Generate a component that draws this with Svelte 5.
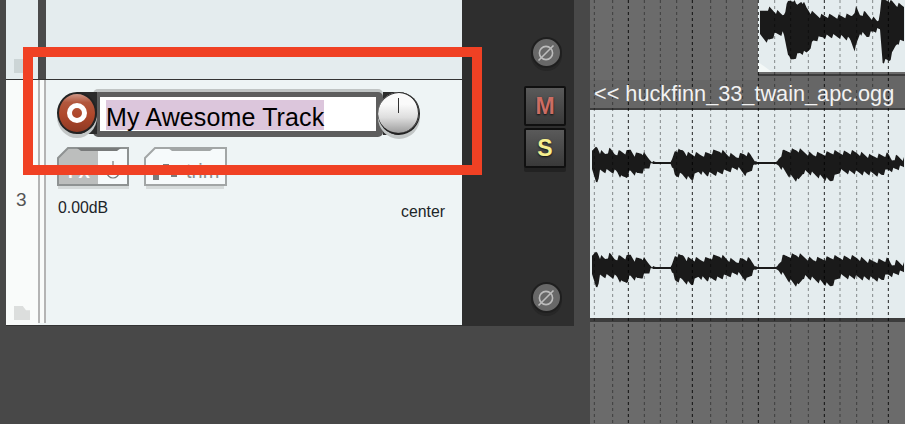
<script>
  // waveform envelopes, traced in 3x coordinates of the arrange view
  const clipTop = [[540,40],[565,25],[585,35],[610,45],[625,5],[640,0],[650,20],[665,0],[680,25],[695,40],[720,48],[780,50],[815,48],[828,25],[840,45],[855,40],[870,50],[895,65],[905,0],[925,0],[950,15],[975,20]];
  const clipBottom = [[540,110],[565,125],[585,105],[610,100],[630,185],[660,160],[680,160],[700,125],[730,110],[780,110],[810,120],[825,150],[840,100],[860,110],[880,95],[900,90],[908,185],[930,180],[950,130],[975,120]];
  const laneTop = [[36,460],[50,438],[60,455],[75,462],[90,450],[105,462],[120,456],[140,458],[152,450],[165,465],[185,458],[205,475],[225,486],[275,486],[285,450],[300,455],[310,450],[320,462],[365,465],[420,452],[445,465],[470,470],[490,462],[510,465],[530,486],[590,486],[610,455],[650,450],[700,465],[760,458],[830,458],[870,470],[925,465],[935,480],[950,470],[975,480]];
  const laneBottom = [[36,515],[50,550],[60,515],[85,515],[110,515],[125,535],[140,530],[150,515],[170,525],[195,510],[220,492],[275,492],[285,530],[305,525],[335,540],[355,515],[380,525],[420,520],[470,505],[500,525],[530,492],[590,492],[625,525],[655,545],[670,515],[720,530],[750,545],[780,515],[850,520],[905,525],[925,510],[940,510],[975,500]];

  function at(points, x) {
    for (let i = 1; i < points.length; i++) {
      if (x <= points[i][0]) {
        const [x0, y0] = points[i - 1];
        const [x1, y1] = points[i];
        return y0 + ((y1 - y0) * (x - x0)) / (x1 - x0);
      }
    }
    return points[points.length - 1][1];
  }

  function wave(top, bottom) {
    const start = top[0][0];
    const upper = [];
    const lower = [];
    let i = 0;
    for (let x = start; x <= 975; x += 4) {
      const a = at(top, x);
      const b = at(bottom, x);
      // rough edge on everything that is not silence
      const up = b - a > 12 ? ((i * 7919) % 13) / 13 - 0.5 : 0;
      const down = b - a > 12 ? ((i * 6151) % 11) / 11 - 0.5 : 0;
      upper.push(`${x},${Math.max(0, a + up * 16)}`);
      lower.unshift(`${x},${b + down * 16}`);
      i++;
    }
    return [...upper, ...lower].join(" ");
  }

  const clipWave = wave(clipTop, clipBottom);
  const laneWave = wave(laneTop, laneBottom);

  const gridLines = [
    [43, false], [98, false], [145, true], [193, false], [241, false],
    [290, false], [337, true], [392, false], [439, false], [488, false],
    [535, true], [584, false], [632, false], [685, false], [733, true],
    [780, false], [830, false], [878, false], [925, true],
  ];
</script>

<div class="app">
  <div class="edge"></div>

  <section class="tracks">
    <div class="track-top">
      <div class="strip"><div class="folder top"></div></div>
      <div class="bar"></div>
    </div>

    <div class="track">
      <div class="strip light">
        <span class="number">3</span>
        <div class="folder"></div>
      </div>
      <div class="rails"></div>
      <div class="controls">
        <div class="name-row">
          <div class="rec"><div class="rec-ball"><div class="rec-ring"></div></div></div>
          <div class="name"><span>My Awesome Track</span></div>
          <div class="pan"><div class="pan-ball"><i></i></div></div>
        </div>

        <div class="buttons">
          <svg class="btn" width="74" height="44" viewBox="0 0 74 44">
            <path d="M1 40h71v3H1z" fill="#d5dada" />
            <path d="M1 12 11 2H71V39H1Z" fill="#f6fafb" />
            <path d="M1 12 11 2H41V39H1Z" fill="#bcbebd" />
            <path d="M1 12 11 2H71V39H1Z" fill="none" stroke="#8e9292" stroke-width="2" />
            <path d="M20 2H64L60 5H24Z" fill="#787a7a" />
            <text x="11" y="32" class="fx">FX</text>
            <path d="M50 26a6 6 0 1 0 12 0" fill="none" stroke="#777" stroke-width="1.2" />
            <path d="M56 15v9" stroke="#777" stroke-width="1.2" />
          </svg>
          <svg class="btn" width="84" height="44" viewBox="0 0 84 44">
            <path d="M2 40h78v3H2z" fill="#d5dada" />
            <path d="M1 12 11 2H82V39H1Z" fill="#f6fafb" stroke="#a2a6a6" stroke-width="2" />
            <path d="M24 2H70L66 5H28Z" fill="#a2a6a6" />
            <rect x="9" y="20" width="6" height="14" fill="#7c7c7c" />
            <rect x="19" y="18" width="6" height="7" fill="#7c7c7c" />
            <rect x="27" y="22" width="6" height="9" fill="#7c7c7c" />
            <text x="42" y="32" class="trim">trim</text>
          </svg>
        </div>

        <div class="readout">
          <span>0.00dB</span>
          <span class="center">center</span>
        </div>
      </div>
    </div>
  </section>

  <section class="mixer">
    <button class="phase first" aria-label="phase">
      <svg width="20" height="20" viewBox="0 0 20 20"><circle cx="10" cy="10" r="6.6" /><path d="M2.5 17.5 17.5 2.5" /></svg>
    </button>
    <button class="ms mute">M</button>
    <button class="ms solo">S</button>
    <button class="phase last" aria-label="phase">
      <svg width="20" height="20" viewBox="0 0 20 20"><circle cx="10" cy="10" r="6.6" /><path d="M2.5 17.5 17.5 2.5" /></svg>
    </button>
  </section>

  <div class="gutter"></div>

  <section class="arrange">
    <div class="clip-row">
      <div class="empty"></div>
      <div class="clip"><div class="fade"></div><div class="clip-end"></div></div>
    </div>
    <div class="label"><span>&lt;&lt; huckfinn_33_twain_apc.ogg</span></div>
    <div class="lane"></div>
    <div class="below"></div>

    <svg class="overlay" width="315" height="424" viewBox="30 0 945 1272">
      <polygon points={clipWave} fill="#1a1a1a" />
      <polygon points={laneWave} fill="#1a1a1a" />
      <polygon points={laneWave} fill="#1a1a1a" transform="translate(0 315)" />
      {#each gridLines as [x, strong]}
        <line x1={x} x2={x} y1="0" y2="1272" stroke-width="3" stroke-dasharray="9 9"
          stroke={strong ? "rgba(0,0,0,0.85)" : "rgba(0,0,0,0.42)"} />
      {/each}
    </svg>
  </section>

  <div class="callout"></div>
</div>

<style>
  :global(body) {
    margin: 0;
    background: #484848;
  }

  .app {
    position: relative;
    display: flex;
    width: 905px;
    height: 424px;
    overflow: hidden;
    background: #484848;
    font-family: "Liberation Sans", Arial, sans-serif;
  }

  .edge {
    width: 6px;
    flex: none;
  }

  .tracks {
    width: 456px;
    height: 326px;
    flex: none;
    display: flex;
    flex-direction: column;
  }

  .track-top {
    height: 79px;
    display: flex;
    background: #e4ecee;
    border-bottom: 1px solid #333;
    flex: none;
  }

  .strip {
    position: relative;
    width: 32px;
    flex: none;
  }

  .strip.light {
    background: #f9fbfa;
  }

  .bar {
    width: 8px;
    background: #4a4a4a;
  }

  .folder {
    position: absolute;
    left: 8px;
    bottom: 5px;
    width: 16px;
    height: 14px;
    background: #dcdedd;
    clip-path: polygon(0 0, 55% 0, 75% 30%, 100% 30%, 100% 100%, 0 100%);
  }

  .folder.top {
    background: #ccd5d6;
    bottom: 6px;
  }

  .track {
    flex: 1;
    display: flex;
    background: #eef4f5;
    border-bottom: 1px solid #333;
  }

  .number {
    position: absolute;
    left: 10px;
    top: 109px;
    font-size: 19px;
    color: #555;
  }

  .rails {
    width: 4px;
    flex: none;
    margin-bottom: 2px;
    background: #f9fbfa;
    border-left: 2px solid #b4b4b4;
    border-right: 2px solid #b4b4b4;
  }

  .controls {
    flex: 1;
    padding: 12px 17px 0 11px;
  }

  .name-row {
    display: flex;
    height: 45px;
  }

  .rec {
    position: relative;
    z-index: 2;
    width: 40px;
    height: 42px;
    flex: none;
    background: linear-gradient(#2b2b2b, #2b2b2b) 20px 0 / 20px 100% no-repeat;
  }

  .rec-ball {
    width: 36px;
    height: 38px;
    border: 2px solid #232323;
    border-radius: 50%;
    display: flex;
    align-items: center;
    justify-content: center;
    background: linear-gradient(#cf9787 0, #b2583e 22%, #b0482b 55%, #8e3a24 100%);
    box-shadow: 0 4px 0 #c2c6c6;
  }

  .rec-ring {
    width: 10px;
    height: 10px;
    border: 5px solid #fff;
    border-radius: 50%;
  }

  .name {
    position: relative;
    z-index: 1;
    display: flex;
    align-items: flex-start;
    width: 276px;
    height: 34px;
    margin-left: -4px;
    flex: none;
    background: #fff;
    border: solid #5d5d5d;
    border-width: 5px 7px 6px 7px;
    border-radius: 5px;
    box-shadow: 0 -3px 0 #c0c4c4;
  }

  .name span {
    display: block;
    margin: 3px 0 0 6px;
    height: 30px;
    line-height: 35px;
    font-size: 25px;
    letter-spacing: 0.13px;
    color: #000;
    background: #dcc6dc;
    white-space: nowrap;
  }

  .pan {
    position: relative;
    z-index: 2;
    width: 42px;
    height: 43px;
    margin-left: -5px;
    flex: none;
    background: linear-gradient(#2b2b2b, #2b2b2b) 5px 0 / 16px 100% no-repeat;
  }

  .pan-ball {
    position: relative;
    width: 41px;
    height: 41px;
    border-right: 1px solid #222;
    border-bottom: 2px solid #222;
    border-radius: 50%;
    background: linear-gradient(#fafafa 0 30%, #dedede 62%, #9c9c9c 100%);
    box-shadow: 0 4px 0 #c2c6c6, inset 0 1px 0 #2b2b2b, inset -1px 0 0 #2b2b2b;
  }

  .pan-ball i {
    position: absolute;
    left: 20px;
    top: 6px;
    width: 1px;
    height: 15px;
    background: #333;
  }

  .buttons {
    display: flex;
    gap: 13px;
    margin-top: 9px;
  }

  .btn {
    display: block;
    flex: none;
  }

  .fx {
    font: bold 17px "Liberation Sans", Arial, sans-serif;
    fill: #fff;
  }

  .trim {
    font: 20px "Liberation Sans", Arial, sans-serif;
    fill: #8a8e8e;
  }

  .readout {
    display: flex;
    justify-content: space-between;
    margin: 9px 0 0 1px;
    font-size: 15.8px;
    color: #1c2428;
  }

  .center {
    margin-top: 4px;
  }

  .mixer {
    position: relative;
    width: 112px;
    height: 326px;
    flex: none;
    display: flex;
    flex-direction: column;
    align-items: center;
    padding: 37px 0 0 56px;
    box-sizing: border-box;
    background: #2e2e2e;
  }

  .mixer button {
    padding: 0;
    flex: none;
    font-family: inherit;
  }

  .phase {
    display: flex;
    align-items: center;
    justify-content: center;
    width: 31px;
    height: 31px;
    border: 2px solid #1f1f1f;
    border-radius: 50%;
    background: #686868;
    box-shadow: 0 3px 0 #272727;
  }

  .phase svg {
    fill: none;
    stroke: #bcbcbc;
    stroke-width: 1.6;
  }

  .ms {
    width: 42px;
    height: 40px;
    margin-left: -2px;
    border: 2px solid #101010;
    border-radius: 2px;
    background: linear-gradient(#5a5a5a, #393939);
    font-size: 23px;
    font-weight: bold;
    text-shadow: 0 1px 2px #111;
  }

  .mute {
    margin-top: 18px;
    color: #cc6d64;
  }

  .solo {
    margin-top: 2px;
    color: #f6ef8e;
    box-shadow: 0 4px 0 #222;
  }

  .last {
    margin-top: 114px;
  }

  .gutter {
    width: 16px;
    flex: none;
  }

  .arrange {
    position: relative;
    width: 315px;
    flex: none;
    display: flex;
    flex-direction: column;
  }

  .clip-row {
    height: 80px;
    display: flex;
    flex: none;
  }

  .empty {
    width: 168px;
    background: #6b6b6b;
  }

  .clip {
    position: relative;
    flex: 1;
    background: #e4ecee;
    border-bottom: 8px solid transparent;
  }

  .fade {
    position: absolute;
    left: 0;
    bottom: 0;
    width: 14px;
    height: 10px;
    background: #f3f8f7;
    clip-path: polygon(0 0, 100% 100%, 0 100%);
  }

  .clip-end {
    position: absolute;
    left: 0;
    right: 0;
    bottom: -8px;
    height: 8px;
    background: linear-gradient(#6b6b6b 0 2px, #3c3c3c 2px 4px, #666 4px);
  }

  .label {
    height: 28px;
    flex: none;
    display: flex;
    align-items: center;
    padding-left: 4px;
    background: #666;
    border-bottom: 2px solid #3d3d3d;
  }

  .label span {
    position: relative;
    z-index: 1;
    font-size: 21.7px;
    color: #f2f2f2;
    white-space: nowrap;
  }

  .lane {
    height: 208px;
    flex: none;
    background: #e4ecee;
    border-bottom: 4px solid;
    border-image: linear-gradient(#636363 0 50%, #3c3c3c 50%) 4;
  }

  .below {
    flex: 1;
    background: #6b6b6b;
  }

  .overlay {
    position: absolute;
    left: 0;
    top: 0;
  }

  /* the red annotation frame drawn over the screenshot */
  .callout {
    position: absolute;
    left: 23px;
    top: 47px;
    width: 439px;
    height: 108px;
    border: 10px solid #f04124;
  }
</style>
